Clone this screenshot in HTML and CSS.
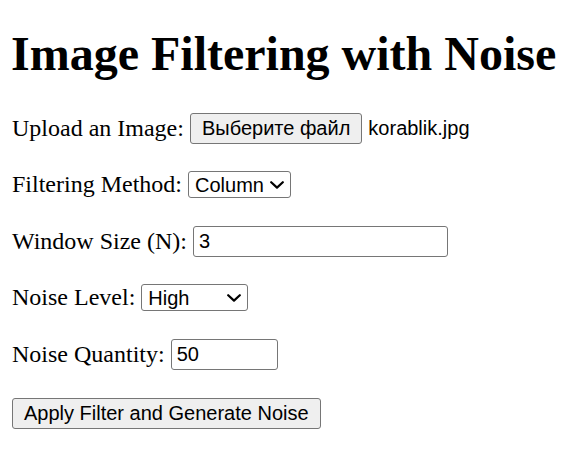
FILE: index.html
```html
<!DOCTYPE html>
<html lang="en">
<head>
<meta charset="utf-8">
<title>Image Filtering with Noise</title>
<link rel="stylesheet" href="styles.css">
</head>
<body>
<h1 class="title">Image Filtering with Noise</h1>
<form class="form">
  <div class="field">
    <label class="label">Upload an Image:</label>
    <span class="file">
      <button type="button" class="btn">Выберите файл</button>
      <span class="file-name">korablik.jpg</span>
    </span>
  </div>
  <div class="field">
    <label class="label" for="method">Filtering Method:</label>
    <span class="select-wrap select-method">
      <select id="method" class="select">
        <option>Column</option>
        <option>Row</option>
      </select>
      <svg class="chevron" width="14" height="8" viewBox="0 0 14 8" aria-hidden="true"><path d="M1.2 1.2 L7 6.6 L12.8 1.2" fill="none" stroke="#000" stroke-width="2.2" stroke-linecap="round" stroke-linejoin="round"/></svg>
    </span>
  </div>
  <div class="field">
    <label class="label" for="win">Window Size (N):</label>
    <input id="win" class="input input-wide" type="text" value="3">
  </div>
  <div class="field">
    <label class="label" for="level">Noise Level:</label>
    <span class="select-wrap select-level">
      <select id="level" class="select">
        <option>Low</option>
        <option>Medium</option>
        <option selected>High</option>
      </select>
      <svg class="chevron" width="14" height="8" viewBox="0 0 14 8" aria-hidden="true"><path d="M1.2 1.2 L7 6.6 L12.8 1.2" fill="none" stroke="#000" stroke-width="2.2" stroke-linecap="round" stroke-linejoin="round"/></svg>
    </span>
  </div>
  <div class="field">
    <label class="label" for="qty">Noise Quantity:</label>
    <input id="qty" class="input input-short" type="text" value="50">
  </div>
  <div class="field field-submit">
    <button type="button" class="btn">Apply Filter and Generate Noise</button>
  </div>
</form>
</body>
</html>
```
FILE: styles.css
```css
html, body {
  background: #ffffff;
}

body {
  margin: 12px 0 12px 11px;
  font-family: "Liberation Serif", "Times New Roman", serif;
  font-size: 24px;
  color: #000000;
}

.title {
  font-size: 48px;
  font-weight: bold;
  line-height: normal;
  white-space: nowrap;
  margin: 14px 0 31.5px;
}

.form {
  display: flex;
  flex-direction: column;
  gap: 25.5px;
  padding-left: 1px;
}

.field {
  display: flex;
  align-items: center;
  gap: 6px;
  height: 31px;
}

.field-submit {
  margin-top: 3px;
}

.label {
  line-height: normal;
  white-space: nowrap;
}

.file {
  display: flex;
  align-items: center;
  gap: 6px;
}

.file-name,
.btn,
.select,
.input {
  font-family: "Liberation Sans", Arial, sans-serif;
  font-size: 20px;
  color: #000000;
}

.btn {
  box-sizing: border-box;
  height: 31px;
  padding: 0 11px;
  margin: 0;
  border: 1px solid #767676;
  border-radius: 3px;
  background: #efefef;
  line-height: normal;
  white-space: nowrap;
}

.select-wrap {
  display: grid;
  align-items: center;
  justify-items: end;
}

.select-wrap > * {
  grid-area: 1 / 1;
}

.select {
  -webkit-appearance: none;
  appearance: none;
  box-sizing: border-box;
  width: 100%;
  height: 27px;
  margin: 0;
  padding: 0 24px 0 6px;
  border: 1px solid #767676;
  border-radius: 3px;
  background: #ffffff;
  line-height: normal;
}

.chevron {
  margin-right: 7px;
  pointer-events: none;
}

.select-method {
  width: 103px;
}

.select-level {
  width: 107px;
}

.input {
  box-sizing: border-box;
  height: 31px;
  margin: 0;
  padding: 0 5px;
  border: 1px solid #767676;
  border-radius: 3px;
  background: #ffffff;
}

.input-wide {
  width: 255px;
}

.input-short {
  width: 107px;
}
```
